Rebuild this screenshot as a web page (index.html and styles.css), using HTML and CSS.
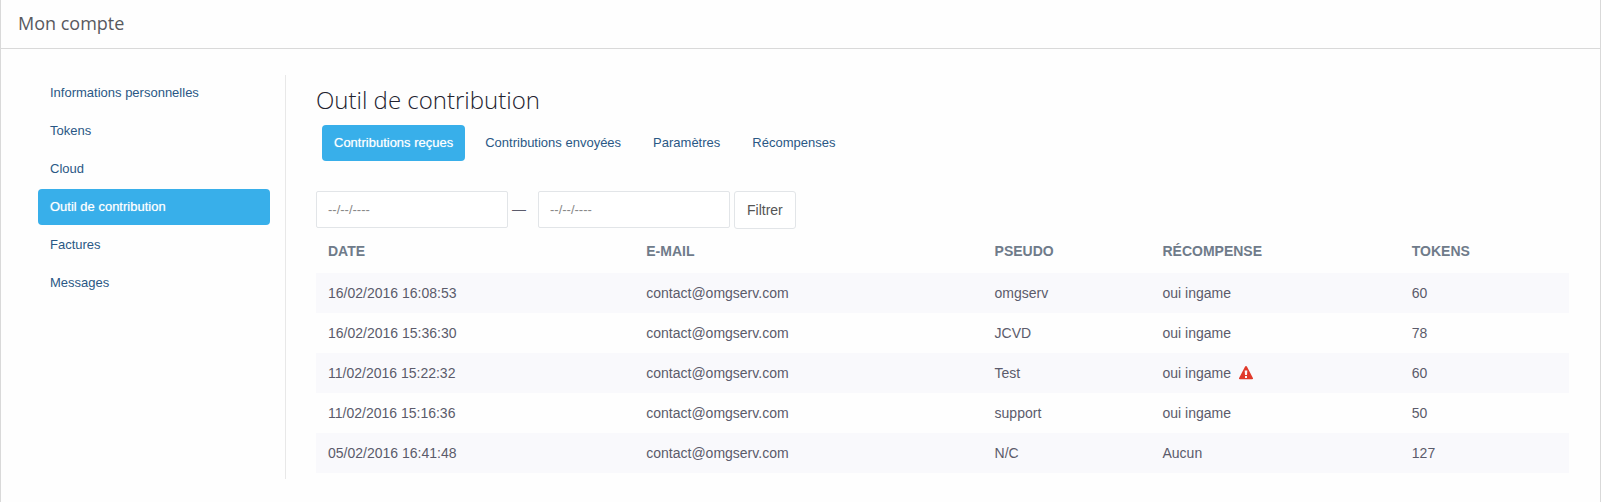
FILE: index.html
```html
<!DOCTYPE html>
<html lang="fr">
<head>
    <meta charset="UTF-8">
    <meta name="viewport" content="width=device-width, initial-scale=1.0">
    <title>Mon compte</title>
    <link rel="stylesheet" href="styles.css">
</head>
<body>
    <div class="panel">
        <header class="panel-header">
            <h1>Mon compte</h1>
        </header>
        <div class="panel-body">
            <nav class="sidebar">
                <a href="#">Informations personnelles</a>
                <a href="#">Tokens</a>
                <a href="#">Cloud</a>
                <a href="#" class="active">Outil de contribution</a>
                <a href="#">Factures</a>
                <a href="#">Messages</a>
            </nav>
            <main class="content">
                <h2>Outil de contribution</h2>
                <nav class="tabs">
                    <a href="#" class="active">Contributions reçues</a>
                    <a href="#">Contributions envoyées</a>
                    <a href="#">Paramètres</a>
                    <a href="#">Récompenses</a>
                </nav>
                <form class="filter">
                    <input type="text" placeholder="--/--/----" aria-label="Date de début">
                    <span class="dash">—</span>
                    <input type="text" placeholder="--/--/----" aria-label="Date de fin">
                    <button type="button">Filtrer</button>
                </form>
                <table>
                    <thead>
                        <tr>
                            <th class="col-date">Date</th>
                            <th class="col-email">E-mail</th>
                            <th class="col-pseudo">Pseudo</th>
                            <th class="col-reward">Récompense</th>
                            <th class="col-tokens">Tokens</th>
                        </tr>
                    </thead>
                    <tbody>
                        <tr>
                            <td>16/02/2016 16:08:53</td>
                            <td>contact@omgserv.com</td>
                            <td>omgserv</td>
                            <td>oui ingame</td>
                            <td>60</td>
                        </tr>
                        <tr>
                            <td>16/02/2016 15:36:30</td>
                            <td>contact@omgserv.com</td>
                            <td>JCVD</td>
                            <td>oui ingame</td>
                            <td>78</td>
                        </tr>
                        <tr>
                            <td>11/02/2016 15:22:32</td>
                            <td>contact@omgserv.com</td>
                            <td>Test</td>
                            <td>oui ingame
                                <svg class="warning" viewBox="0 0 14 14" role="img" aria-label="Attention">
                                    <path fill-rule="evenodd" d="M7 0c.4 0 .7.2.9.6l6 11.300c.4.700 0 1.300-.8 1.300H.9c-.8 0-1.200-.6-.8-1.300l6-11.300C6.300.2 6.600 0 7 0zM5.700 4.500L6 9h2l.3-4.500zM6 10v2h2v-2z"/>
                                </svg>
                            </td>
                            <td>60</td>
                        </tr>
                        <tr>
                            <td>11/02/2016 15:16:36</td>
                            <td>contact@omgserv.com</td>
                            <td>support</td>
                            <td>oui ingame</td>
                            <td>50</td>
                        </tr>
                        <tr>
                            <td>05/02/2016 16:41:48</td>
                            <td>contact@omgserv.com</td>
                            <td>N/C</td>
                            <td>Aucun</td>
                            <td>127</td>
                        </tr>
                    </tbody>
                </table>
            </main>
        </div>
    </div>
</body>
</html>
```
FILE: styles.css
```css
* {
    box-sizing: border-box;
}
body {
    margin: 0;
    background: #fefefe;
    color: #5b5b6b;
    font-family: "Liberation Sans", Arial, sans-serif;
    font-size: 14px;
    line-height: 20px;
}
a {
    color: #2a5885;
    text-decoration: none;
}
.panel {
    min-height: 100vh;
    border: solid #d9d9d9;
    border-width: 0 1px;
}
.panel-header {
    padding: 11px 17px 13px;
    border-bottom: 1px solid #d9d9d9;
}
h1, h2 {
    margin: 0;
    font-family: "Open Sans", sans-serif;
}
h1 {
    font-size: 18px;
    line-height: 24px;
    font-weight: 400;
    color: #58595e;
}
.panel-body {
    display: flex;
    padding: 26px 31px 22px 37px;
}
.sidebar {
    display: flex;
    flex-direction: column;
    flex: 0 0 248px;
    gap: 2px;
    padding-right: 15px;
    border-right: 1px solid #e8e8e8;
}
.sidebar a, .tabs a {
    padding: 8px 12px;
    border-radius: 4px;
    font-size: 13px;
}
.sidebar a.active, .tabs a.active {
    background: #38afea;
    color: #fff;
}

/* slight faux bold on the selected entries */
.active {
    text-shadow: 0 0 1px rgba(255, 255, 255, 0.6);
}
.content {
    flex: 1;
    padding: 7px 0 6px 30px;
}
h2 {
    font-size: 24px;
    line-height: 36px;
    font-weight: 300;
    color: #22222e;
}
.tabs {
    display: flex;
    gap: 8px;
    margin: 7px 6px 30px;
}
.filter {
    display: flex;
    align-items: flex-start;
    gap: 4px;
}
.filter input {
    width: 192px;
    height: 37px;
    padding: 8px 11px;
    border: 1px solid #e2e5e8;
    border-radius: 2px;
    background: #fff;
    font-family: inherit;
    font-size: 13px;
}
.filter input::placeholder {
    color: #888;
}
.dash {
    width: 22px;
    line-height: 36px;
}
.filter button {
    height: 38px;
    padding: 0 12px;
    border: 1px solid #e2e5e8;
    border-radius: 3px;
    background: #fff;
    color: #555;
    font-family: inherit;
    font-size: 14px;
}
table {
    width: 100%;
    margin-top: 4px;
    border-collapse: collapse;
    table-layout: fixed;
}
th, td {
    height: 40px;
    padding: 0 12px;
    text-align: left;
}
th {
    color: #6f7b8a;
    text-transform: uppercase;
    padding-bottom: 4px;
}
tbody tr:nth-child(odd) {
    background: #f9f9fc;
}
.col-date {
    width: 25.4%;
}
.col-email {
    width: 27.8%;
}
.col-pseudo {
    width: 13.4%;
}
.col-reward {
    width: 19.9%;
}
.col-tokens {
    width: 13.5%;
}
.warning {
    width: 14px;
    height: 14px;
    margin-left: 4px;
    fill: #e03a2b;
    vertical-align: -2px;
}
```
